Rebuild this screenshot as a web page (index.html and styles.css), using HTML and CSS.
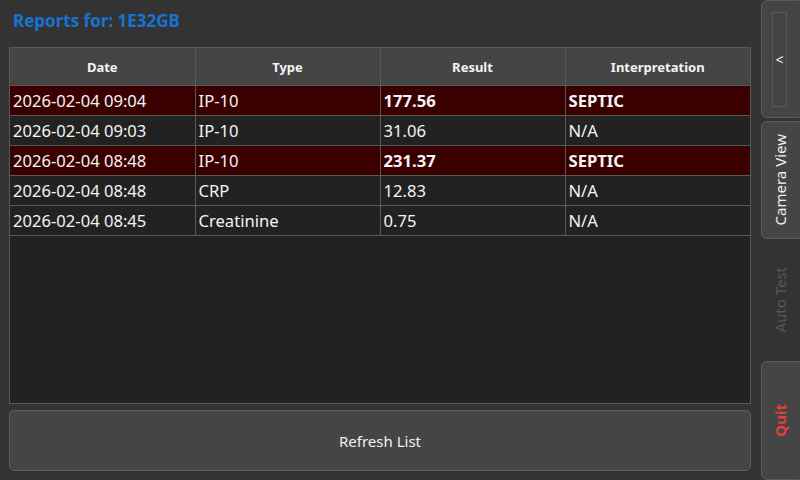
FILE: index.html
```html
<!DOCTYPE html>
<html>
<head>
<meta charset="utf-8">
<link rel="stylesheet" href="styles.css">
</head>
<body>
<div class="app">
  <div class="main">
    <h1 class="title">Reports for: 1E32GB</h1>
    <div class="table-box">
      <table class="reports">
        <thead>
          <tr><th>Date</th><th>Type</th><th>Result</th><th>Interpretation</th></tr>
        </thead>
        <tbody>
          <tr class="septic"><td>2026-02-04 09:04</td><td>IP-10</td><td class="b">177.56</td><td class="b">SEPTIC</td></tr>
          <tr><td>2026-02-04 09:03</td><td>IP-10</td><td>31.06</td><td>N/A</td></tr>
          <tr class="septic"><td>2026-02-04 08:48</td><td>IP-10</td><td class="b">231.37</td><td class="b">SEPTIC</td></tr>
          <tr><td>2026-02-04 08:48</td><td>CRP</td><td>12.83</td><td>N/A</td></tr>
          <tr><td>2026-02-04 08:45</td><td>Creatinine</td><td>0.75</td><td>N/A</td></tr>
        </tbody>
      </table>
    </div>
    <button class="refresh">Refresh List</button>
  </div>
  <div class="side">
    <div class="slot"><div class="sbtn back"><div class="inner">&lt;</div></div></div>
    <div class="slot"><div class="sbtn"><span class="vtext">Camera View</span></div></div>
    <div class="slot"><div class="sbtn disabled"><span class="vtext">Auto Test</span></div></div>
    <div class="slot"><div class="sbtn"><span class="vtext quit">Quit</span></div></div>
  </div>
</div>
</body>
</html>
```
FILE: styles.css
```css
html, body {
  margin: 0;
  padding: 0;
}
body {
  width: 800px;
  height: 480px;
  overflow: hidden;
  background: #333333;
  font-family: "Noto Sans", "DejaVu Sans", sans-serif;
  color: #f0f0f0;
}
.app {
  display: flex;
  width: 800px;
  height: 480px;
}
.main {
  width: 742px;
  margin-left: 9px;
  margin-right: 10px;
  display: flex;
  flex-direction: column;
}
.title {
  margin: 0;
  height: 47px;
  box-sizing: border-box;
  padding: 9px 0 0 4px;
  font-size: 17px;
  font-weight: 700;
  color: #1673d4;
  line-height: 24px;
}
.table-box {
  height: 357px;
  box-sizing: border-box;
  border: 1px solid #5a5a5a;
  background: #222222;
}
.reports {
  width: 100%;
  border-collapse: collapse;
  table-layout: fixed;
}
.reports th {
  height: 37px;
  padding: 0;
  background: #454545;
  font-size: 13px;
  font-weight: 700;
  text-align: center;
  color: #f4f4f4;
  border-right: 1px solid #5a5a5a;
  border-bottom: 1px solid #5a5a5a;
}
.reports td {
  height: 29px;
  padding: 0 0 0 3px;
  font-size: 16.6px;
  color: #f4f4f4;
  border-right: 1px solid #5a5a5a;
  border-bottom: 1px solid #5a5a5a;
  white-space: nowrap;
}
.reports th:last-child,
.reports td:last-child {
  border-right: none;
}
.reports tr.septic td {
  background: #3a0000;
}
.reports td.b {
  font-weight: 700;
}
.refresh {
  margin-top: 6px;
  height: 61px;
  width: 742px;
  box-sizing: border-box;
  border: 1px solid #5e5e5e;
  border-radius: 5px;
  background: #454545;
  color: #f0f0f0;
  font-family: "Noto Sans", "DejaVu Sans", sans-serif;
  font-size: 15px;
  padding: 0;
}
.side {
  width: 39px;
  display: flex;
  flex-direction: column;
}
.slot {
  height: 120px;
  box-sizing: border-box;
  padding: 1px 0;
  display: flex;
}
.slot:first-child {
  padding: 0 0 2px 0;
}
.slot:last-child {
  padding: 1px 0 0 0;
}
.sbtn {
  flex: 1;
  margin-right: -5px;
  box-sizing: border-box;
  border: 1px solid #5a5a5a;
  border-radius: 6px;
  background: #454545;
  display: flex;
  align-items: center;
  justify-content: center;
  padding-right: 7px;
}
.sbtn.disabled {
  background: transparent;
  border-color: transparent;
}
.back {
  padding-top: 11px;
  padding-bottom: 10px;
}
.inner {
  width: 15px;
  height: 100%;
  box-sizing: border-box;
  border: 1px solid #5a5a5a;
  display: flex;
  align-items: center;
  justify-content: center;
  font-size: 14px;
  font-weight: 400;
  color: #f0f0f0;
}
.vtext {
  writing-mode: vertical-rl;
  transform: rotate(180deg);
  font-size: 15px;
  color: #f0f0f0;
  white-space: nowrap;
}
.disabled .vtext {
  color: #575757;
}
.vtext.quit {
  color: #e0403c;
  font-weight: 700;
}
```
